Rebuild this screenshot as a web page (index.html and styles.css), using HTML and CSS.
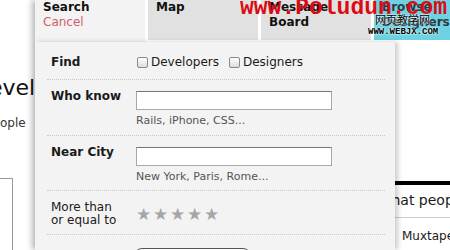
FILE: index.html
```html
<!DOCTYPE html>
<html lang="en">
<head>
	<meta charset="UTF-8">
	<title>Find developers</title>
	<link rel="stylesheet" href="styles.css">
</head>
<body>
<div class="page">
	<div class="side-left">
		<h1 class="bg-title">Devel</h1>
		<p class="bg-sub">people</p>
		<div class="bg-box"></div>
	</div>

	<div class="main">
		<ul class="tabs">
			<li class="tab active">Search<a class="cancel">Cancel</a></li>
			<li class="tab">Map</li>
			<li class="tab">Message<br>Board</li>
			<li class="tab browse">Browse<br>Designers</li>
		</ul>

		<div class="body">
			<form class="finder">
				<div class="row row-find">
					<label>Find</label>
					<div class="checks">
						<span class="check"><input type="checkbox">Developers</span>
						<span class="check"><input type="checkbox">Designers</span>
					</div>
				</div>
				<div class="row row-who">
					<label>Who know</label>
					<div class="field">
						<input type="text" class="text">
						<div class="hint">Rails, iPhone, CSS...</div>
					</div>
				</div>
				<div class="row row-city">
					<label>Near City</label>
					<div class="field">
						<input type="text" class="text">
						<div class="hint">New York, Paris, Rome...</div>
					</div>
				</div>
				<div class="row row-rating">
					<label class="plain">More than<br>or equal to</label>
					<div class="stars"><span>★</span><span>★</span><span>★</span><span>★</span><span>★</span></div>
				</div>
				<div class="row-submit">
					<button class="go">Search</button>
				</div>
			</form>

			<div class="side-right">
				<h2 class="bg-head">what people</h2>
				<p class="bg-item">Muxtape</p>
			</div>
		</div>
	</div>

	<!-- watermark on the original screenshot -->
	<div class="watermark">
		<div class="wm-url">www.Poludun.com</div>
		<div class="wm-cn">网页教学网</div>
		<div class="wm-en">WWW.WEBJX.COM</div>
	</div>
</div>
</body>
</html>
```

FILE: styles.css
```css
*{
	box-sizing: border-box;
}
body{
	margin:0;
	font-size:12px;
	font-family: "DejaVu Sans", "Noto Sans CJK SC", sans-serif;
	color:#1a1a1a;
	background:#fff;
}
.page{
	display: flex;
	width:450px;
	height:250px;
	overflow: hidden;
	position: relative;
}

/* page behind the popup */
.side-left{
	width:35px;
	flex: none;
	overflow: hidden;
	padding-top:74px;
}
.bg-title{
	margin:0 0 0 -28px;
	font-size:22px;
	font-weight: normal;
	line-height:28px;
	white-space: nowrap;
	color:#111;
}
.bg-sub{
	margin:14px 0 0 -15px;
	font-size:12px;
	color:#333;
	white-space: nowrap;
}
.bg-box{
	margin:48px 0 0 -20px;
	width:33px;
	height:80px;
	border:1px solid #999;
}
.side-right{
	flex:1;
	min-width: 0;
	overflow: hidden;
	padding-top:139px;
}
.bg-head{
	margin:0 0 0 -15px;
	padding:6px 0 8px;
	border-top:4px solid #000;
	border-bottom:1px solid #ccc;
	font-size:14px;
	font-weight: normal;
	line-height:18px;
	white-space: nowrap;
}
.bg-item{
	margin:11px 0 0 7px;
	font-size:12px;
	white-space: nowrap;
}

/* popup */
.main{
	flex:1;
	min-width: 0;
	display: flex;
	flex-direction: column;
	box-shadow: -3px 0 6px rgba(0,0,0,.28);
}
.tabs{
	display: flex;
	align-items: flex-start;
	gap:3px;
	height:42px;
	margin:0;
	padding:0;
	list-style: none;
	background:#fff;
}
.tab{
	flex: none;
	width:110px;
	height:40px;
	padding:0 8px;
	background:#e1e1e1;
	font-weight: bold;
	line-height:15px;
	color:#111;
}
.tab.active{
	height:42px;
	background:#f3f3f3;
}
.tab.browse{
	background:#6dd3e3;
	color:#2d3a44;
}
.cancel{
	display: block;
	font-weight: normal;
	color:#cf5e6c;
}
.body{
	flex:1;
	display: flex;
	min-height: 0;
}
.finder{
	flex: none;
	width:360px;
	margin:0;
	padding:0 10px 0 12px;
	background:#f3f3f3;
	box-shadow: 3px 0 5px rgba(0,0,0,.2);
	position: relative;
	z-index: 1;
}
.row{
	display: grid;
	grid-template-columns: 85px 1fr;
	align-items: start;
	padding-left:4px;
	border-bottom:1px dotted #c9c9c9;
}
.row label{
	font-weight: bold;
	line-height:15px;
}
.row label.plain{
	font-weight: normal;
	line-height:13px;
}
.row-find{
	height:38px;
	padding-top:13px;
}
.row-who{
	height:56px;
	padding-top:9px;
}
.row-city{
	height:55px;
	padding-top:9px;
}
.row-rating{
	height:44px;
	padding-top:10px;
}
.checks{
	display: flex;
	gap:9px;
	height:15px;
	line-height:15px;
}
.check{
	display: flex;
	align-items: center;
	gap:3px;
}
.check input{
	appearance: none;
	width:11px;
	height:11px;
	margin:0 0 0 1px;
	border:1px solid #8a8a8a;
	border-radius:2px;
	background:linear-gradient(#fff, #dcdcdc);
}
.text{
	display: block;
	width:196px;
	height:19px;
	margin:2px 0 0;
	padding:0;
	border:1px solid #a8a8a8;
	border-top-color:#777;
	background:#fff;
}
.hint{
	margin-top:4px;
	font-size:11px;
	line-height:14px;
	color:#555;
}
.stars{
	display: flex;
	margin-top:3px;
	color:#a6a6a6;
	font-size:17px;
	line-height:20px;
}
.stars span{
	width:17px;
}
.row-submit{
	padding:13px 0 0 87px;
}
.go{
	width:117px;
	height:24px;
	border:1px solid #555;
	border-radius:8px;
	background:linear-gradient(#fff, #ddd);
	font:inherit;
}

/* watermark */
.watermark{
	position: absolute;
	top:-4px;
	left:240px;
	pointer-events: none;
}
.wm-url{
	font-family: "Liberation Mono", monospace;
	font-weight: bold;
	font-size:23px;
	line-height:24px;
	color:#dc0a14;
	white-space: nowrap;
}
.wm-cn{
	margin:-6px 0 0 135px;
	font-size:11px;
	line-height:14px;
	color:#000;
	text-shadow: 0 0 2px #fff, 0 0 2px #fff;
}
.wm-en{
	margin:-1px 0 0 128px;
	font-family: "Liberation Mono", monospace;
	font-weight: bold;
	font-size:9px;
	line-height:10px;
	color:#000;
	text-shadow: 0 0 2px #fff, 0 0 2px #fff;
}
```
